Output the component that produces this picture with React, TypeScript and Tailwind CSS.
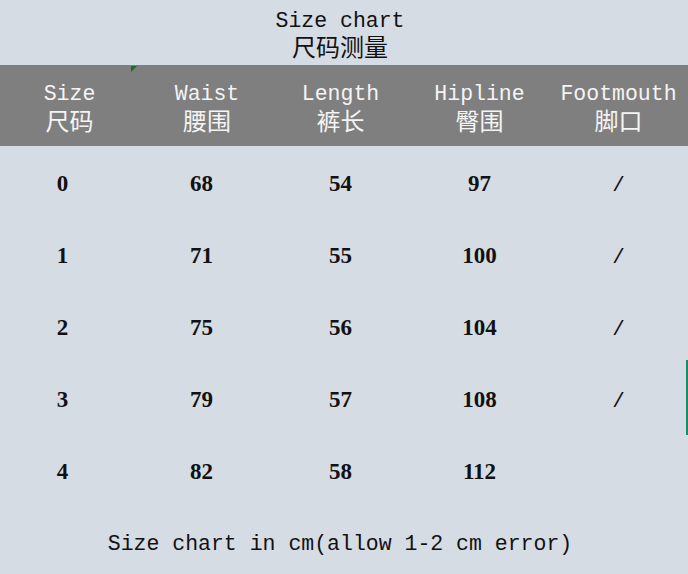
const mono = "font-['Liberation_Mono','Noto_Sans_CJK_SC',monospace]"
const serif = "font-['Liberation_Serif','Noto_Sans_CJK_SC',serif]"

const headers = [
  { en: "Size", zh: "尺码", shift: "" },
  { en: "Waist", zh: "腰围", shift: "pr-[3px]" },
  { en: "Length", zh: "裤长", shift: "pr-[14px]" },
  { en: "Hipline", zh: "臀围", shift: "pr-[14px]" },
  { en: "Footmouth", zh: "脚口", shift: "pr-[14px]" },
]

const rows = [
  ["0", "68", "54", "97", "/"],
  ["1", "71", "55", "100", "/"],
  ["2", "75", "56", "104", "/"],
  ["3", "79", "57", "108", "/"],
  ["4", "82", "58", "112", ""],
]

export default function App() {
  return (
    <div className="relative w-[688px] h-[574px] overflow-hidden bg-[#d6dce4] text-[#111]">
      {/* Title */}
      <div className={`h-[65px] pt-[7px] pr-[8px] text-center ${mono}`}>
        <p className="text-[21.5px] leading-[29px]">Size chart</p>
        <p className="text-[24px] leading-[28px]">尺码测量</p>
      </div>

      {/* Header bar */}
      <div className={`relative h-[81px] pt-[15px] bg-[#7f7f7f] text-[#f4f4f4] ${mono}`}>
        <div className="absolute left-[131px] top-[1px] w-0 h-0 border-t-[6px] border-r-[6px] border-t-[#1d6b2c] border-r-transparent" />
        <div className="grid grid-cols-[repeat(5,139px)]">
          {headers.map((h) => (
            <div key={h.en} className={`text-center ${h.shift}`}>
              <p className="text-[21.5px] leading-[29px]">{h.en}</p>
              <p className="text-[24px] leading-[29px]">{h.zh}</p>
            </div>
          ))}
        </div>
      </div>

      {/* Rows */}
      <div className="pt-[2px] ml-[-7px]">
        {rows.map((r, i) => (
          <div key={i} className="grid grid-cols-[repeat(5,139px)] h-[72px] items-center">
            {r.map((c, j) => (
              <div
                key={j}
                className={`text-center ${
                  j === 4 ? `${mono} text-[21px] pt-[3px]` : `${serif} font-bold text-[23px]`
                }`}
              >
                {c}
              </div>
            ))}
          </div>
        ))}
      </div>

      {/* Footer */}
      <p className={`mt-[21px] pr-[8px] text-center text-[21.5px] leading-[30px] ${mono}`}>
        Size chart in cm(allow 1-2 cm error)
      </p>

      <div className="absolute right-0 top-[360px] w-[2px] h-[75px] bg-[#1f8a66]" />
    </div>
  )
}
